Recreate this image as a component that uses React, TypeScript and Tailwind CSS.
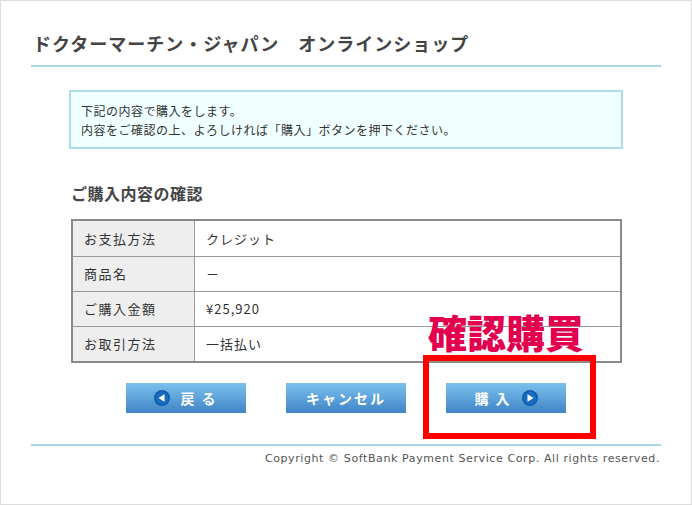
import React from "react";

const font = { fontFamily: '"Noto Sans CJK JP", "Noto Sans", sans-serif' };

const rows: [string, string][] = [
  ["お支払方法", "クレジット"],
  ["商品名", "－"],
  ["ご購入金額", "¥25,920"],
  ["お取引方法", "一括払い"],
];

const Arrow: React.FC<{ dir: "left" | "right" }> = ({ dir }) => (
  <svg width="16" height="16" viewBox="0 0 16 16">
    <circle cx="8" cy="8" r="8" fill="#0d5fae" />
    <circle cx="8" cy="8" r="6.2" fill="#1a6cc0" />
    {dir === "left" ? (
      <path d="M4.5 8 L10.5 4.3 L10.5 11.7 Z" fill="#fff" />
    ) : (
      <path d="M11.5 8 L5.5 4.3 L5.5 11.7 Z" fill="#fff" />
    )}
  </svg>
);

const Btn: React.FC<{ children: React.ReactNode }> = ({ children }) => (
  <button className="w-[120px] h-[30px] flex items-center justify-center gap-[10px] bg-gradient-to-b from-[#7cc2ee] to-[#3f84c6] text-white font-bold text-[14px] tracking-[2px]">
    {children}
  </button>
);

const App: React.FC = () => {
  return (
    <div
      className="relative w-[692px] h-[505px] border border-[#dcdcdc] bg-white text-[#333]"
      style={font}
    >
      {/* Header */}
      <div className="px-[30px] pt-[30px]">
        <h1 className="pl-[2px] text-[18px] leading-[24px] font-bold text-[#444] tracking-[1px]">
          ドクターマーチン・ジャパン　オンラインショップ
        </h1>
        <div className="mt-[10px] h-[2px] bg-[#a9d7e6]" />
      </div>

      {/* Notice */}
      <div className="mx-[68px] mt-[23px] h-[59px] border-2 border-[#acdcea] bg-[#f0ffff] px-[10px] pt-[9px] text-[12px] leading-[19px] text-[#333] tracking-[0.5px]">
        <p>下記の内容で購入をします。</p>
        <p>内容をご確認の上、よろしければ「購入」ボタンを押下ください。</p>
      </div>

      {/* Confirm heading */}
      <h2 className="ml-[70px] mt-[34px] text-[16px] leading-[20px] font-bold text-[#444] tracking-[0.5px]">
        ご購入内容の確認
      </h2>

      {/* Table */}
      <div className="ml-[70px] mt-[16px] w-[551px] border-2 border-[#8a8a8a]">
        {rows.map(([k, v], i) => (
          <div
            key={k}
            className={`flex h-[35px] text-[13px] text-[#333] ${
              i > 0 ? "border-t border-[#999]" : ""
            }`}
          >
            <div className="w-[122px] shrink-0 bg-[#eeeeee] border-r border-[#999] flex items-center pl-[11px] tracking-[1.5px]">
              {k}
            </div>
            <div className="flex items-center pl-[11px] tracking-[1px]">{v}</div>
          </div>
        ))}
      </div>

      {/* Buttons */}
      <div className="ml-[125px] mt-[20px] flex gap-[40px]">
        <Btn>
          <Arrow dir="left" />
          <span>戻 る</span>
        </Btn>
        <Btn>
          <span>キャンセル</span>
        </Btn>
        <Btn>
          <span>購 入</span>
          <Arrow dir="right" />
        </Btn>
      </div>

      {/* Footer */}
      <div className="px-[30px] mt-[31px]">
        <div className="h-[2px] bg-[#a9d7e6]" />
        <p
          className="mt-[5px] pr-[1px] text-right text-[11px] leading-[16px] tracking-[0.6px] text-[#555]"
          style={{ fontFamily: '"DejaVu Sans", "Noto Sans", sans-serif' }}
        >
          Copyright © SoftBank Payment Service Corp. All rights reserved.
        </p>
      </div>

      {/* Annotation overlay */}
      <div className="absolute left-[427px] top-[307px] text-[39px] leading-[46px] font-black text-[#e2004f] tracking-[0px]">
        確認購買
      </div>
      <div className="absolute left-[422px] top-[354px] w-[173px] h-[84px] border-[6px] border-[#ff0000]" />
    </div>
  );
};

export default App;
